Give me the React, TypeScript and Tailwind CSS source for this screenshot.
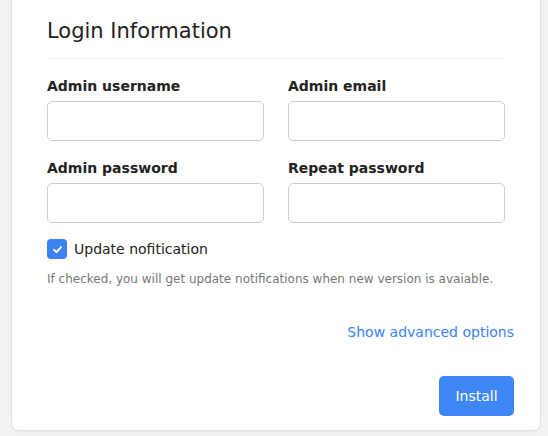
import React from 'react';

const font = { fontFamily: '"DejaVu Sans", Verdana, sans-serif' };

const Field: React.FC<{ label: string; type?: string }> = ({ label, type = 'text' }) => (
  <div className="flex flex-col">
    <label className="text-[14px] leading-[20px] font-bold text-[#222]">{label}</label>
    <input
      type={type}
      className="mt-[5px] h-[40px] w-full rounded-[5px] border border-[#cdcdcd] bg-white px-3 outline-none"
    />
  </div>
);

export default function App() {
  return (
    <div className="w-[548px] h-[436px] overflow-hidden bg-[#f2f2f2]" style={font}>
      <div className="ml-[11px] -mt-[10px] w-[530px] rounded-[8px] border border-[#e2e2e2] bg-white pl-[35px] pr-[26px] pt-[26px] pb-[14px] shadow-[0_1px_2px_rgba(0,0,0,0.05)]">
        {/* Header */}
        <div className="mr-[9px] border-b border-[#ececec] pb-[13px]">
          <h2 className="text-[21px] leading-[28px] font-normal text-[#222]">Login Information</h2>
        </div>

        {/* Fields */}
        <div className="mr-[9px] mt-[17px] grid grid-cols-2 gap-x-[24px] gap-y-[17px]">
          <Field label="Admin username" />
          <Field label="Admin email" type="email" />
          <Field label="Admin password" type="password" />
          <Field label="Repeat password" type="password" />
        </div>

        {/* Update notification */}
        <div className="mt-[16px] flex items-center gap-[7px]">
          <span className="flex h-[20px] w-[20px] items-center justify-center rounded-[4px] bg-[#3b82f6]">
            <svg width="11" height="11" viewBox="0 0 12 12" fill="none">
              <path d="M2.2 6.4 L4.8 8.8 L9.8 3.4" stroke="white" strokeWidth="2.2" strokeLinecap="round" strokeLinejoin="round" />
            </svg>
          </span>
          <span className="text-[14px] leading-[20px] text-[#222]">Update nofitication</span>
        </div>
        <p className="mt-[11px] text-[12px] leading-[18px] text-[#777]">
          If checked, you will get update notifications when new version is avaiable.
        </p>

        {/* Advanced */}
        <div className="mt-[34px] flex justify-end">
          <a className="text-[14px] leading-[20px] text-[#3b82f6] cursor-pointer">Show advanced options</a>
        </div>

        {/* Actions */}
        <div className="mt-[34px] flex justify-end">
          <button className="h-[40px] w-[75px] rounded-[5px] bg-[#3d87f5] text-[14px] text-white">Install</button>
        </div>
      </div>
    </div>
  );
}
